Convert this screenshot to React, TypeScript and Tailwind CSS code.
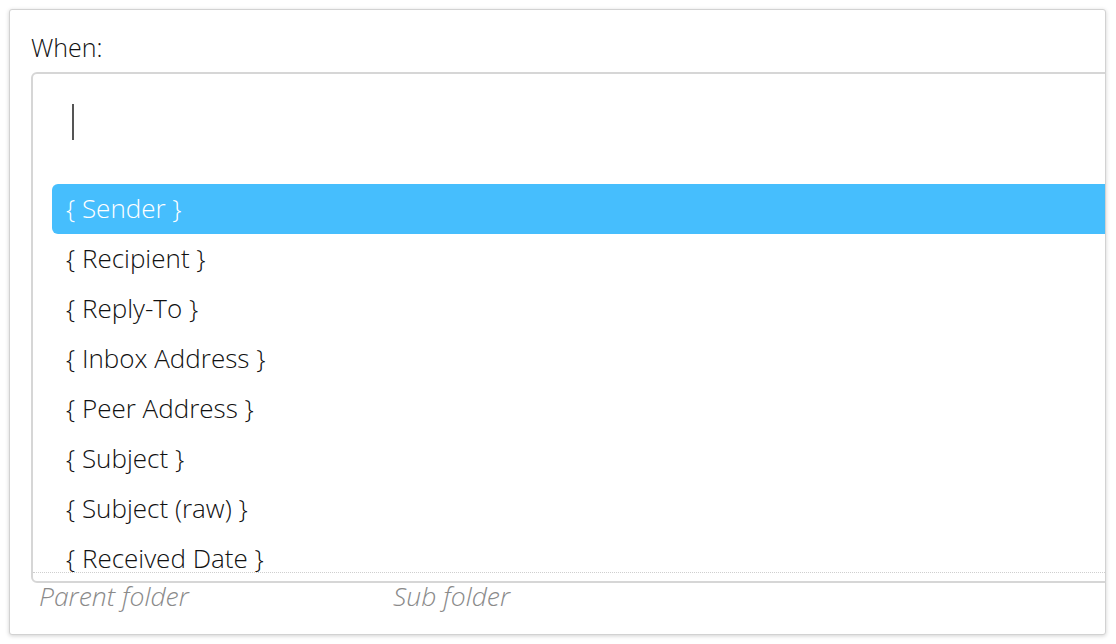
const items = [
  '{ Sender }',
  '{ Recipient }',
  '{ Reply-To }',
  '{ Inbox Address }',
  '{ Peer Address }',
  '{ Subject }',
  '{ Subject (raw) }',
  '{ Received Date }',
  '{ Received Time }',
]

export default function App() {
  return (
    <div className="min-h-screen bg-white pl-[9px] pt-[9px]" style={{ fontFamily: '"Open Sans", "Noto Sans", sans-serif' }}>
      <div className="w-[1097px] h-[626px] border border-[#d2d2d2] rounded-[3px] shadow-[0_1px_4px_rgba(0,0,0,0.18)] overflow-hidden bg-white">
        <div className="pl-[21px] pt-[22px]">
          <div className="text-[25px] leading-[30px] font-light text-[#111]">When:</div>
          <div className="mt-[10px] w-[1200px] h-[511px] border-2 border-[#d6d6d6] rounded-[6px] flex flex-col">
            <div className="h-[91px] shrink-0 pl-[39px] pt-[30px]">
              <div className="w-[2px] h-[36px] bg-[#555]" />
            </div>
            <div className="flex-1 overflow-hidden pl-[19px] pt-[19px] border-b border-dotted border-[#cfcfcf] mb-[8px]">
              {items.map((it, i) => (
                <div
                  key={it}
                  className={
                    i === 0
                      ? 'h-[50px] flex items-center px-[14px] pb-[2px] text-[26px] leading-[34px] font-light text-white bg-[#46befd] rounded-l-[6px]'
                      : 'h-[50px] flex items-center px-[14px] pb-[2px] text-[26px] leading-[34px] font-light text-[#111]'
                  }
                >
                  {it}
                </div>
              ))}
            </div>
          </div>
          <div className="flex pl-[8px] -mt-[3px] text-[26.5px] leading-[32px] font-light italic text-[#8a8a8a]">
            <div className="w-[354px]">Parent folder</div>
            <div>Sub folder</div>
          </div>
        </div>
      </div>
    </div>
  )
}
